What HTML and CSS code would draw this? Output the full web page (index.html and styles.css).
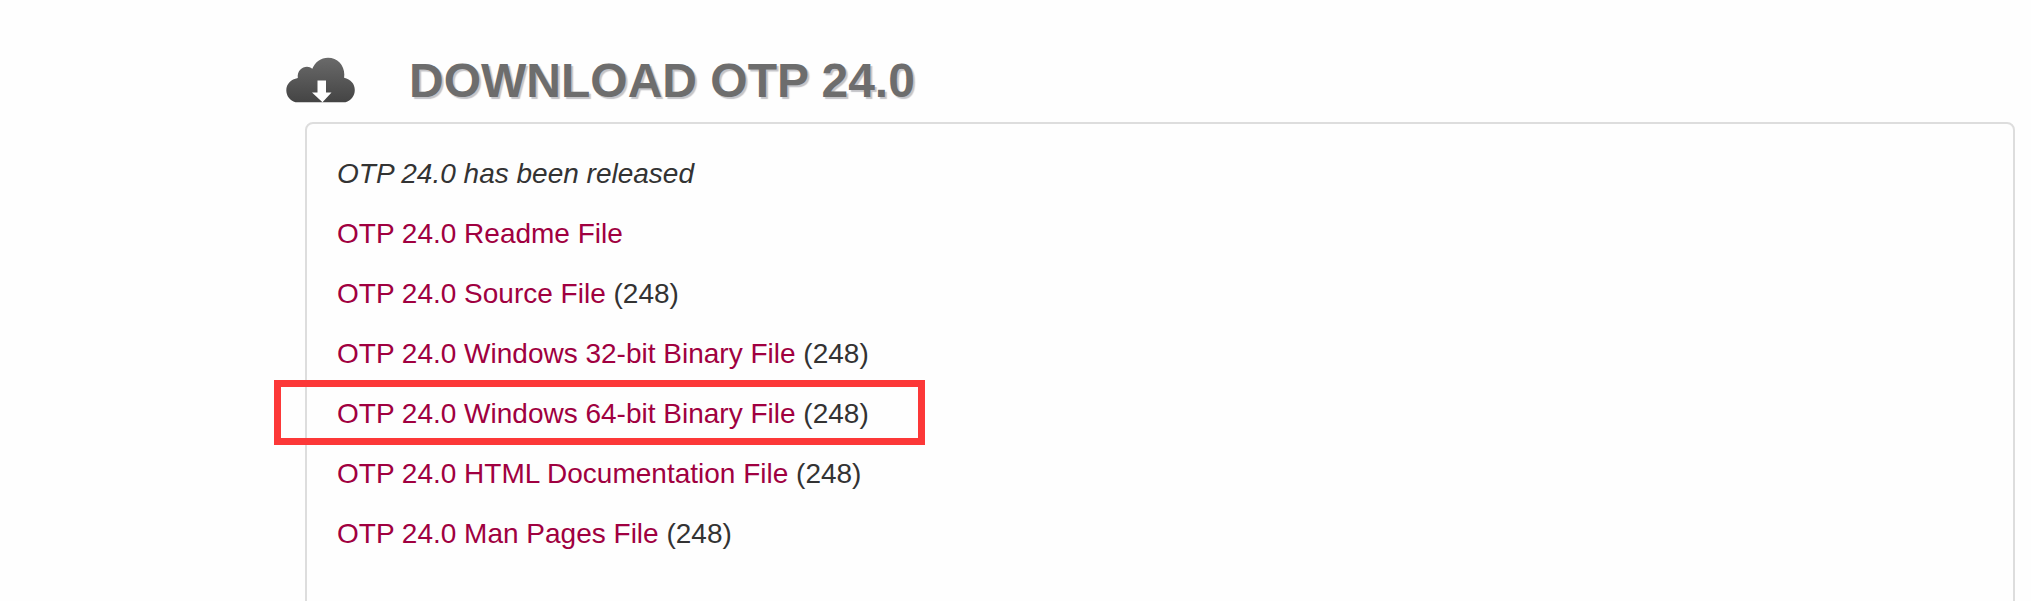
FILE: index.html
```html
<!DOCTYPE html>
<html lang="en">
<head>
<meta charset="utf-8">
<title>Download OTP 24.0</title>
<link rel="stylesheet" href="styles.css">
</head>
<body>
<main class="page">
  <header class="heading">
    <svg class="cloud" viewBox="0 0 70 46" aria-hidden="true">
      <defs>
        <linearGradient id="cloud-fill" x1="0" y1="0" x2="0" y2="1">
          <stop offset="0" stop-color="#6a6a6a"/>
          <stop offset="1" stop-color="#444"/>
        </linearGradient>
      </defs>
      <path fill="url(#cloud-fill)" d="M10 45.300C4.500 43.500 .8 39 .8 33.200C.8 27 5.500 22.300 12.300 21C11.500 14 16.500 9.800 21.500 9.800C23.500 9.800 25.300 10.500 26.800 11.800C29.500 5 35.500 .7 42.500 .7C51.800 .7 58.800 8 58.800 17.500L58.600 20.800C65.300 22.300 69.300 27 69.300 33C69.300 39 65.500 43.500 60 45.300Z"/>
      <path fill="#fff" d="M32 23.500H40.500V35.500H46L37 45.300L26.500 35.500H32Z"/>
    </svg>
    <h1 class="title">DOWNLOAD OTP 24.0</h1>
  </header>
  <section class="panel">
    <p class="line"><em>OTP 24.0 has been released</em></p>
    <p class="line"><a class="link">OTP 24.0 Readme File</a></p>
    <p class="line"><a class="link">OTP 24.0 Source File</a> (248)</p>
    <p class="line"><a class="link">OTP 24.0 Windows 32-bit Binary File</a> (248)</p>
    <p class="line marked"><a class="link">OTP 24.0 Windows 64-bit Binary File</a> (248)</p>
    <p class="line"><a class="link">OTP 24.0 HTML Documentation File</a> (248)</p>
    <p class="line"><a class="link">OTP 24.0 Man Pages File</a> (248)</p>
  </section>
</main>
</body>
</html>
```
FILE: styles.css
```css
*, *::after { box-sizing: border-box; }
body {
  margin: 0;
  background: #fefefe;
  color: #333;
  font: 28px/40px "Liberation Sans", Arial, sans-serif;
}
.page {
  height: 601px;
  overflow: hidden;
  display: flex;
  flex-direction: column;
  padding: 51px 16px 0 285px;
}
.heading {
  display: flex;
  flex: none;
  align-items: flex-start;
  gap: 53px;
  height: 71px;
}
.cloud { width: 71px; height: 46px; margin-top: 6px; }
.title {
  margin: 0;
  font-size: 48px;
  line-height: 60px;
  color: #6d6d6d;
  text-shadow: 2px 2px 1px #c4c4c8;
}
.panel {
  height: 520px;
  flex: none;
  margin-left: 20px;
  padding: 30px;
  border: 2px solid #ddd;
  border-radius: 8px;
}
.line { margin: 0 0 20px; }
.link { color: #a00040; }
.marked { position: relative; }
/* red frame drawn over the panel edge */
.marked::after {
  content: "";
  position: absolute;
  left: -63px;
  top: -14px;
  width: 651px;
  height: 65px;
  border: 7px solid #fc3838;
}
```
